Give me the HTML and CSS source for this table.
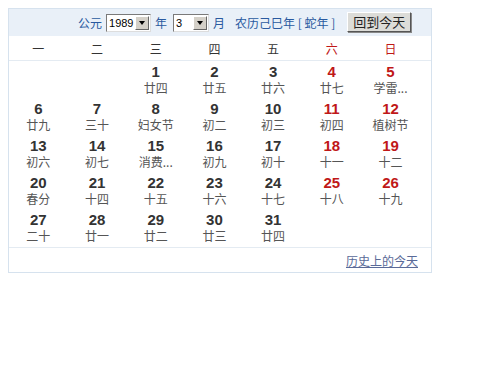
FILE: index.html
```html
<!DOCTYPE html>
<html>
<head>
<meta charset="utf-8">
<link rel="stylesheet" href="styles.css">
</head>
<body>
<div class="cal">
  <div class="head">
    <span class="lbl">公元</span>
    <span class="sel sel-year"><span class="val">1989</span><span class="arr"></span></span>
    <span class="lbl">年</span>
    <span class="sel sel-month"><span class="val">3</span><span class="arr"></span></span>
    <span class="lbl">月</span>
    <span class="lbl nong">农历己巳年 [ 蛇年 ]</span>
    <span class="btn">回到今天</span>
  </div>
  <div class="week">
    <span>一</span><span>二</span><span>三</span><span>四</span><span>五</span><span class="red">六</span><span class="red">日</span>
  </div>
  <div class="days">
    <div class="d"></div><div class="d"></div>
    <div class="d"><b>1</b><i>廿四</i></div>
    <div class="d"><b>2</b><i>廿五</i></div>
    <div class="d"><b>3</b><i>廿六</i></div>
    <div class="d red"><b>4</b><i>廿七</i></div>
    <div class="d red"><b>5</b><i>学雷...</i></div>
    <div class="d"><b>6</b><i>廿九</i></div>
    <div class="d"><b>7</b><i>三十</i></div>
    <div class="d"><b>8</b><i>妇女节</i></div>
    <div class="d"><b>9</b><i>初二</i></div>
    <div class="d"><b>10</b><i>初三</i></div>
    <div class="d red"><b>11</b><i>初四</i></div>
    <div class="d red"><b>12</b><i>植树节</i></div>
    <div class="d"><b>13</b><i>初六</i></div>
    <div class="d"><b>14</b><i>初七</i></div>
    <div class="d"><b>15</b><i>消费...</i></div>
    <div class="d"><b>16</b><i>初九</i></div>
    <div class="d"><b>17</b><i>初十</i></div>
    <div class="d red"><b>18</b><i>十一</i></div>
    <div class="d red"><b>19</b><i>十二</i></div>
    <div class="d"><b>20</b><i>春分</i></div>
    <div class="d"><b>21</b><i>十四</i></div>
    <div class="d"><b>22</b><i>十五</i></div>
    <div class="d"><b>23</b><i>十六</i></div>
    <div class="d"><b>24</b><i>十七</i></div>
    <div class="d red"><b>25</b><i>十八</i></div>
    <div class="d red"><b>26</b><i>十九</i></div>
    <div class="d"><b>27</b><i>二十</i></div>
    <div class="d"><b>28</b><i>廿一</i></div>
    <div class="d"><b>29</b><i>廿二</i></div>
    <div class="d"><b>30</b><i>廿三</i></div>
    <div class="d"><b>31</b><i>廿四</i></div>
  </div>
  <div class="foot"><a class="hist">历史上的今天</a></div>
</div>
</body>
</html>
```
FILE: styles.css
```css
body {
  margin: 8px;
  background: #fff;
  font-family: "Noto Sans CJK SC", "Liberation Sans", sans-serif;
}
.cal {
  width: 422px;
  height: 263px;
  border: 1px solid #d6e2ee;
  display: flex;
  flex-direction: column;
}
.head {
  height: 27px;
  background: #e9f0f8;
  display: flex;
  align-items: center;
  padding-left: 69px;
  font-size: 12px;
  color: #2a5aa0;
}
.lbl { margin-right: 4px; }
.nong { margin-left: 6px; margin-right: 12px; color: #2a5aa0; }
.sel {
  display: inline-flex;
  align-items: center;
  height: 16px;
  border: 1px solid #7a7a7a;
  border-right-color: #ddd;
  border-bottom-color: #ddd;
  background: #fff;
  margin-right: 4px;
  font-family: "Liberation Sans", sans-serif;
  font-size: 11px;
  color: #000;
}
.sel-year { width: 43px; }
.sel-month { width: 34px; margin-left: 2px; }
.val { flex: 1; padding-left: 2px; line-height: 16px; }
.arr {
  width: 14px;
  height: 14px;
  margin-right: 1px;
  background: #d4d0c8;
  border: 1px solid;
  border-color: #fff #666 #666 #fff;
  box-sizing: border-box;
  position: relative;
}
.arr::after {
  content: "";
  position: absolute;
  left: 2.5px;
  top: 4px;
  border-left: 3.5px solid transparent;
  border-right: 3.5px solid transparent;
  border-top: 4px solid #000;
}
.btn {
  display: inline-block;
  height: 18px;
  line-height: 18px;
  padding: 0 5px;
  background: #dcdcd8;
  border: 1px solid;
  border-color: #fff #555 #555 #fff;
  box-shadow: 1px 1px 0 #888;
  color: #222;
  font-size: 13px;
  margin-top: -1px;
}
.week {
  height: 24px;
  border-bottom: 1px solid #e4ebf2;
  display: grid;
  grid-template-columns: repeat(7, 58.7px);
  align-items: center;
  font-size: 12px;
  color: #333;
  text-align: center;
}
.week .red { color: #c01818; }
.days {
  display: grid;
  grid-template-columns: repeat(7, 58.7px);
  grid-auto-rows: 37px;
  height: 186px;
  border-bottom: 1px solid #e4ebf2;
  text-align: center;
}
.d {
  display: flex;
  flex-direction: column;
  align-items: center;
  padding-top: 2px;
}
.d b {
  font-family: "Liberation Sans", Arial, sans-serif;
  font-weight: bold;
  font-size: 15px;
  line-height: 17px;
  color: #333;
}
.d i {
  font-style: normal;
  font-size: 12px;
  line-height: 16px;
  color: #555;
}
.d.red b { color: #c01818; }
.foot {
  flex: 1;
  display: flex;
  justify-content: flex-end;
  align-items: center;
  padding-right: 13px;
}
.hist {
  font-size: 12px;
  color: #5a6a98;
  text-decoration: underline;
}
```
